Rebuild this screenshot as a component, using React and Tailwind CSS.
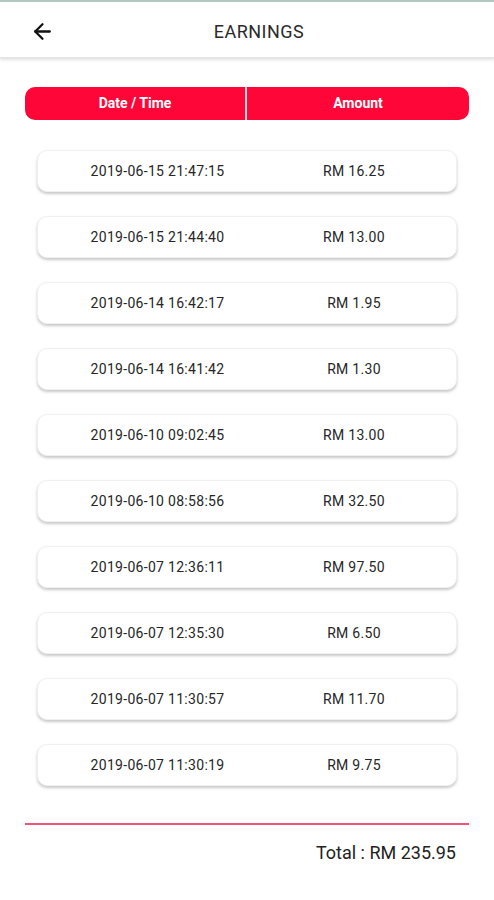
import { ArrowLeft } from 'lucide-react';

const rows = [
  ['2019-06-15 21:47:15', 'RM 16.25'],
  ['2019-06-15 21:44:40', 'RM 13.00'],
  ['2019-06-14 16:42:17', 'RM 1.95'],
  ['2019-06-14 16:41:42', 'RM 1.30'],
  ['2019-06-10 09:02:45', 'RM 13.00'],
  ['2019-06-10 08:58:56', 'RM 32.50'],
  ['2019-06-07 12:36:11', 'RM 97.50'],
  ['2019-06-07 12:35:30', 'RM 6.50'],
  ['2019-06-07 11:30:57', 'RM 11.70'],
  ['2019-06-07 11:30:19', 'RM 9.75'],
];

export default function App() {
  return (
    <div
      className="w-[494px] h-[900px] bg-white flex border-t-2 border-[#b4c6c0] overflow-hidden"
      style={{ fontFamily: 'Roboto, "Liberation Sans", sans-serif' }}
    >
      <div className="flex-1 flex flex-col">
        {/* Header */}
        <div className="h-[56px] shrink-0 flex items-center pt-[4px] relative shadow-[0_2px_3px_rgba(0,0,0,0.12)] border-b border-[#e4e4e4]">
          <button className="absolute left-[30px] top-[17px] text-[#111]">
            <ArrowLeft size={25} strokeWidth={2.2} />
          </button>
          <h1 className="flex-1 text-center pl-[24px] text-[18px] tracking-[0.5px] text-[#2a2a2a]">EARNINGS</h1>
        </div>

        {/* Column header */}
        <div className="mx-[25px] mt-[29px] h-[33px] flex rounded-[10px] bg-[#fe0638] text-white text-[14px] font-bold overflow-hidden">
          <div className="w-[220px] flex items-center justify-center">Date / Time</div>
          <div className="w-[2px] bg-[#ffd3db]" />
          <div className="flex-1 flex items-center justify-center">Amount</div>
        </div>

        {/* Rows */}
        <div className="mx-[37px] w-[420px] mt-[30px] flex flex-col gap-[24px]">
          {rows.map(([date, amount]) => (
            <div
              key={date}
              className="h-[42px] flex items-center rounded-[10px] bg-white border border-[#f0f0f0] shadow-[0_2px_3px_rgba(0,0,0,0.22)] text-[14px] tracking-[0.3px] text-[#262626]"
            >
              <div className="w-[239px] text-center">{date}</div>
              <div className="flex-1 text-center pr-[25px]">{amount}</div>
            </div>
          ))}
        </div>

        {/* Total */}
        <div className="mx-[25px] mt-[37px] h-[2px] bg-[#f0547a]" />
        <div className="mr-[38px] mt-[14px] text-right text-[18px] text-[#222]">Total : RM 235.95</div>
      </div>
      <div className="w-[2px] bg-[#111]" />
    </div>
  );
}
